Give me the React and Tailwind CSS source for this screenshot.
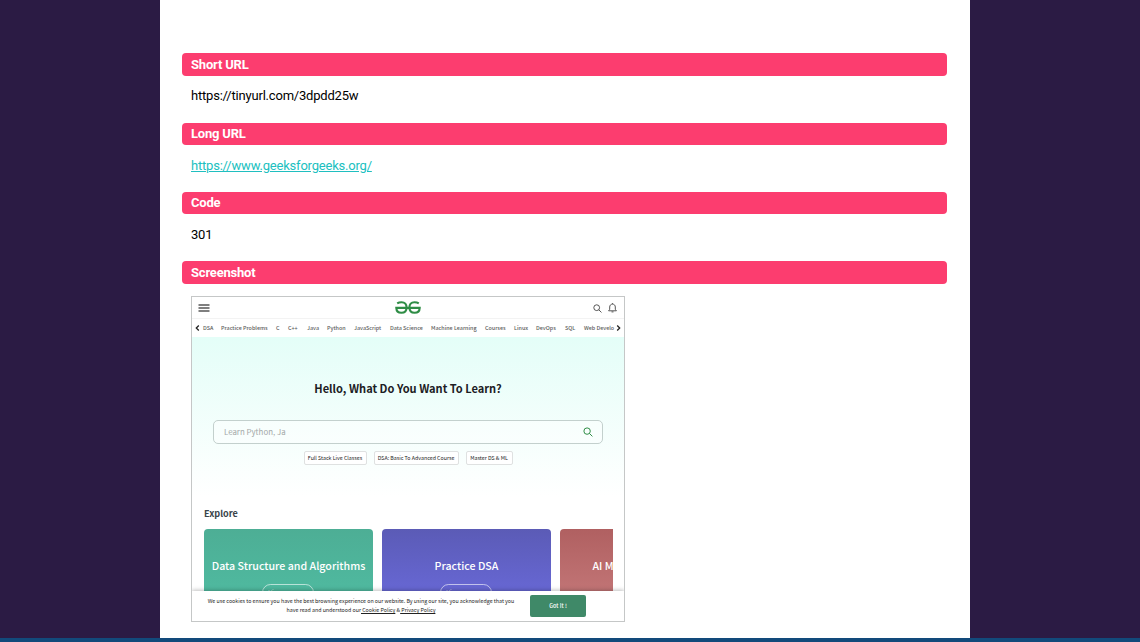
import React from 'react';

const topics = [
  ['DSA', 'w-[18px]'],
  ['Practice Problems', 'w-[55px]'],
  ['C', 'w-[12px]'],
  ['C++', 'w-[19px]'],
  ['Java', 'w-[20px]'],
  ['Python', 'w-[27px]'],
  ['JavaScript', 'w-[36px]'],
  ['Data Science', 'w-[41px]'],
  ['Machine Learning', 'w-[54px]'],
  ['Courses', 'w-[29px]'],
  ['Linux', 'w-[22px]'],
  ['DevOps', 'w-[29px]'],
  ['SQL', 'w-[19px]'],
  ['Web Develo', 'w-[32px]'],
];

function SearchIcon({ className }) {
  return (
    <svg className={className} viewBox="0 0 10 10" fill="none" stroke="currentColor" strokeWidth="1">
      <circle cx="4.1" cy="4.1" r="3.2" />
      <path d="M6.4 6.4L9.4 9.4" />
    </svg>
  );
}

function Logo() {
  return (
    <svg className="mb-[2px] h-[13px] w-[26px]" viewBox="0 0 26 13" fill="none" stroke="#2f8d46" strokeWidth="2.1">
      <path d="M2.2 2.3C3.3 1.6 4.7 1.2 6.6 1.2C9.9 1.2 11.6 3.3 11.6 6.5C11.6 9.8 9.6 11.8 6.4 11.8C3.5 11.8 1.4 10 1.3 6.9H24.7C24.6 10 22.5 11.8 19.6 11.8C16.4 11.8 14.4 9.8 14.4 6.5C14.4 3.3 16.1 1.2 19.4 1.2C21.3 1.2 22.7 1.6 23.8 2.3" />
    </svg>
  );
}

function SiteHeader() {
  return (
    <div className="flex h-[22px] shrink-0 items-center justify-between border-b border-[#f3f3f3] pt-px pr-[7px] pl-[6px]">
      <svg className="h-2 w-[25px]" viewBox="0 0 25 8" stroke="#555" strokeWidth="1.3">
        <path d="M0.5 1H11.5M0.5 4H11.5M0.5 7H11.5" />
      </svg>
      <Logo />
      <div className="flex w-[25px] items-center justify-between pl-px text-[#444]">
        <SearchIcon className="h-[9px] w-[9px]" />
        <svg className="h-[10px] w-[9px]" viewBox="0 0 9 10" fill="none" stroke="currentColor" strokeWidth="0.9">
          <path d="M0.6 7.8H8.4L7.3 6.3V4C7.3 2.3 6.1 1.1 4.5 1.1S1.7 2.3 1.7 4V6.3ZM3.5 8.9H5.5M4.5 0.2V1.1" />
        </svg>
      </div>
    </div>
  );
}

function TopicBar() {
  return (
    <div className="flex h-[18px] shrink-0 items-center pl-[3px] text-[5.4px] leading-[8px] font-medium text-[#5c5c5c]">
      <svg className="mr-[3px] h-[6px] w-[5px] shrink-0" viewBox="0 0 5 6" fill="none" stroke="#222" strokeWidth="1.3">
        <path d="M3.8 0.5L1.3 3L3.8 5.5" />
      </svg>
      {topics.map(([label, width]) => (
        <span key={label} className={`shrink-0 whitespace-nowrap ${width}`}>{label}</span>
      ))}
      <svg className="h-[6px] w-[5px] shrink-0" viewBox="0 0 5 6" fill="none" stroke="#222" strokeWidth="1.3">
        <path d="M1.2 0.5L3.7 3L1.2 5.5" />
      </svg>
    </div>
  );
}

function Hero() {
  return (
    <div className="flex h-[160px] shrink-0 flex-col items-center bg-linear-to-b from-[#e4fef8] to-white pt-[43px]">
      <h2 className="text-[11.05px] leading-[16px] font-bold whitespace-nowrap text-[#1c2024]">Hello, What Do You Want To Learn?</h2>
      <div className="mt-[24px] flex h-[24px] w-[390px] items-center justify-between rounded-[5px] border border-[#c3d0cd] bg-white/40 pr-[9px] pl-[10px]">
        <span className="pb-px text-[7.9px] leading-[12px] text-[#a4a8a8]">Learn Python, Ja</span>
        <SearchIcon className="h-[10px] w-[10px] text-[#2f8d46]" />
      </div>
      <div className="mt-[7px] flex h-[14px] gap-[7px] text-[5.3px] leading-[8px] whitespace-nowrap text-[#222]">
        <span className="flex w-[63px] items-center justify-center rounded-[2px] border border-[#dfe1e1] bg-white">Full Stack Live Classes</span>
        <span className="flex w-[85px] items-center justify-center rounded-[2px] border border-[#dfe1e1] bg-white">DSA: Basic To Advanced Course</span>
        <span className="flex w-[47px] items-center justify-center rounded-[2px] border border-[#dfe1e1] bg-white">Master DS &amp; ML</span>
      </div>
    </div>
  );
}

function Card({ title, className }) {
  return (
    <div className={`flex h-[62px] shrink-0 flex-col items-center overflow-hidden pt-[29px] text-white ${className}`}>
      <h3 className="text-[10.65px] leading-[16px] font-medium whitespace-nowrap">{title}</h3>
      <div className="mt-[10px] mr-[2px] h-[17px] w-[52px] shrink-0 rounded-full border border-white/60 pl-[6px] text-[6px] leading-[15px] text-white/70">View more</div>
    </div>
  );
}

function Explore() {
  return (
    <div className="h-[94px] shrink-0 overflow-hidden pr-[11px] pl-[12px]">
      <h2 className="pt-[9px] text-[9.1px] leading-[14px] font-bold text-[#3a444a]">Explore</h2>
      <div className="mt-[9px] flex gap-[9px] overflow-hidden">
        <Card title="Data Structure and Algorithms" className="w-[169px] rounded-t-[4px] bg-linear-to-b from-[#4dae95] to-[#4fb99f]" />
        <Card title="Practice DSA" className="w-[169px] rounded-t-[4px] bg-linear-to-b from-[#5b5bb6] to-[#6767d3]" />
        <Card title="AI ML & Data Science" className="w-[169px] rounded-tl-[4px] bg-linear-to-b from-[#b06061] to-[#c17475]" />
      </div>
    </div>
  );
}

function CookieNotice() {
  return (
    <div className="relative flex h-[30px] shrink-0 items-center bg-white pl-[12px] shadow-[0_-1px_4px_rgba(0,0,0,0.25)]">
      <p className="w-[314px] text-center text-[5.3px] leading-[9px] whitespace-nowrap text-[#222]">
        We use cookies to ensure you have the best browsing experience on our website. By using our site, you acknowledge that you
        <br />
        have read and understood our<span className="underline"> Cookie Policy</span> &amp;<span className="underline"> Privacy Policy</span>
      </p>
      <div className="ml-[12px] flex h-[22px] w-[56px] items-center justify-center rounded-[2px] bg-[#3f8968] text-[5.5px] font-medium text-white">Got It !</div>
    </div>
  );
}

function SitePreview() {
  return (
    <div className="mt-[12px] ml-[9px] flex h-[326px] w-[434px] flex-col overflow-hidden border border-[#c5c7c7] bg-white font-['Noto_Sans_CJK_SC',sans-serif] tracking-normal">
      <SiteHeader />
      <TopicBar />
      <Hero />
      <Explore />
      <CookieNotice />
    </div>
  );
}

function Section({ title, tall, className, children }) {
  return (
    <section className={className}>
      <h1 className={`rounded-[4px] bg-[#fc3d6f] pl-[9px] font-bold text-white ${tall ? 'h-[23px] leading-[23px]' : 'h-[22px] leading-[21px]'}`}>{title}</h1>
      {children}
    </section>
  );
}

export default function App() {
  return (
    <div className="flex h-[642px] flex-col overflow-hidden bg-[#2b1b44] font-['Roboto',sans-serif]">
      <main className="ml-[160px] h-[638px] w-[810px] bg-white pt-[53px] pr-[23px] pl-[22px] text-[13px] tracking-[-0.2px] text-black">
        <Section title="Short URL" tall className="h-[70px]">
          <p className="mt-[10px] pl-[9px] leading-[20px]">https://tinyurl.com/3dpdd25w</p>
        </Section>
        <Section title="Long URL" className="h-[69px]">
          <p className="mt-[11px] pl-[9px] leading-[20px]"><a className="text-[#20bfc0] underline">https://www.geeksforgeeks.org/</a></p>
        </Section>
        <Section title="Code" className="h-[69px]">
          <p className="mt-[11px] pl-[9px] leading-[20px]">301</p>
        </Section>
        <Section title="Screenshot" tall>
          <SitePreview />
        </Section>
      </main>
      <div className="h-[4px] bg-[#124a7b]" />
    </div>
  );
}
